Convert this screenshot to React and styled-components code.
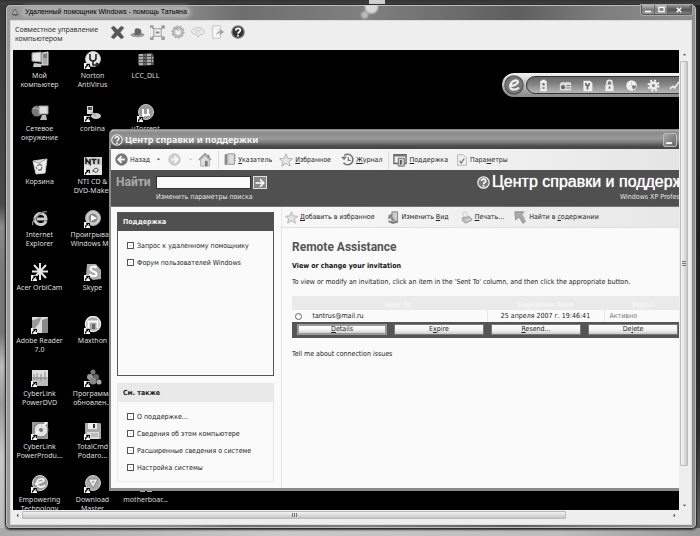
import React from "react";
import styled, { createGlobalStyle, css } from "styled-components";

const ui = '"DejaVu Sans Condensed", "DejaVu Sans", sans-serif';
const noto = '"Noto Sans", sans-serif';
const arial = '"Liberation Sans", Arial, sans-serif';
const roboto = 'Roboto, "Liberation Sans", sans-serif';

const GlobalStyle = createGlobalStyle`
  * { box-sizing: border-box; }
  body { margin: 0; font: 7px/10px ${ui}; color: #222; }
  button, input { font: inherit; color: inherit; margin: 0; padding: 0; }
  button { border: 0; background: none; white-space: nowrap; }
  svg { display: block; flex: none; }
  u { text-underline-offset: 1px; }
`;

/* ---------- outer Vista window ---------- */
const Backdrop = styled.div`
  min-height: 100vh;
  display: flex;
  flex-direction: column;
  padding: 4px 3px 9px 5px;
  overflow: hidden;
  background:
    linear-gradient(#d0d0d0, #d0d0d0) 54% 0 / 16px 4px no-repeat,
    linear-gradient(#333, #444) top / 100% 5px no-repeat,
    linear-gradient(90deg, #aaa, #c9c9c9 40%, #bdbdbd 80%, #999) bottom / 100% 10px no-repeat,
    linear-gradient(#222, #1d1d1d 45%, #2b2b2b 80%, #666) right / 6px 100% no-repeat,
    linear-gradient(#3a3a3a, #4a4a4a 38%, #8a8a8a 42%, #7a7a7a 50%, #777 62%, #bbb 68%, #999 75%, #c8c8c8 85%, #bbb);
`;

const RemoteWindow = styled.main`
  flex: 1;
  min-width: 0;
  display: flex;
  flex-direction: column;
  padding: 0 4px 3px;
  border: 1px solid #2e2e2e;
  border-radius: 5px;
  background: linear-gradient(90deg, #9a9a9a, #8b8b8b 25%, #6e6e6e 34%, #808080 52%, #5e5e5e 74%, #7d7d7d 86%, #909090);
  box-shadow: inset 0 0 0 1px #bdbdbd, 0 1px 2px #333;
`;

const Caption = styled.header`
  height: 15px;
  display: flex;
  align-items: flex-start;
  gap: 3px;
  padding-left: 1px;
  background:
    radial-gradient(circle at 53% 2px, #d8d8d8 0 5px, transparent 8px),
    radial-gradient(circle at 52% 10px, #bbb 0 2px, transparent 5px);
`;

const CaptionTitle = styled.h1`
  margin: 2px 0 0;
  padding: 0 3px;
  border-radius: 5px;
  font: 7px/10px ${arial};
  color: #000;
  background: #aaa;
  box-shadow: 0 0 4px 1px #aaa;
  white-space: nowrap;
`;

const CaptionIcon = styled.span`padding-top: 3px;`;

const CaptionButtons = styled.div`
  margin-left: auto;
  display: flex;
  border: 1px solid #555;
  border-top: 0;
  border-radius: 0 0 3px 3px;
  overflow: hidden;
  box-shadow: 0 0 0 1px #aaa;
`;

const CaptionButton = styled.button`
  width: ${(p) => (p.$wide ? 23 : 13)}px;
  height: 9px;
  display: grid;
  place-items: center;
  border-right: 1px solid #666;
  background: ${(p) => (p.$wide ? "linear-gradient(#999,#555 50%,#808080)" : "linear-gradient(#bbb,#7e7e7e 50%,#999)")};
`;

const Client = styled.div`
  flex: 1;
  display: flex;
  flex-direction: column;
  padding: 0 2px 4px 2px;
  background: #eee;
  border: 1px solid #dcdcdc;
`;

const SessionBar = styled.div`
  height: 29px;
  display: flex;
  align-items: center;
  gap: 3px;
  padding: 0 2px 7px;
`;

const SessionMode = styled.p`
  width: 91px;
  margin: 3px 0 0;
  font: 7px/9px ${noto};
  color: #333;
`;

const SessionButton = styled.button`
  width: 17px;
  height: 18px;
  display: grid;
  place-items: center;
`;

const Viewer = styled.div`
  flex: 1;
  display: grid;
  grid-template-columns: minmax(0, 1fr) 10px;
  grid-template-rows: 1fr 10px;
`;

const VScroll = styled.div`
  display: grid;
  grid-template-rows: 11px 1fr 9px;
  justify-items: center;
`;

const HScroll = styled.div`
  display: grid;
  grid-template-columns: 9px 1fr 9px;
  align-items: center;
`;

const Arrow = styled.button`
  width: 9px;
  height: 9px;
  display: grid;
  place-items: center;
`;

const thumb = css`
  display: grid;
  place-items: center;
  border: 1px solid #bbb;
  border-radius: 1px;
`;

const VThumb = styled.div`
  ${thumb}
  width: 8px;
  height: 92%;
  align-self: start;
  background: linear-gradient(90deg, #f4f4f4, #e4e4e4 50%, #c4c4c4);
`;

const HThumb = styled.div`
  ${thumb}
  width: 84%;
  height: 8px;
  background: linear-gradient(#f2f2f2, #ddd 50%, #c4c4c4);
`;

/* ---------- remote desktop ---------- */
const Desktop = styled.section`
  position: relative;
  overflow: hidden;
  background: #000;
`;

const Shortcuts = styled.div`
  display: grid;
  grid-template-columns: repeat(3, 53px);
  grid-template-rows: repeat(9, 53px);
  height: 460px;
  overflow: hidden;
`;

const Shortcut = styled.a`
  grid-column: ${(p) => p.$col};
  grid-row: ${(p) => p.$row};
  display: flex;
  flex-direction: column;
  align-items: center;
  gap: 2px;
  padding-top: 1px;
  font: 7px/9px ${noto};
  color: #ddd;
  text-align: center;
  text-decoration: none;
  white-space: pre;
`;

/* ---------- floating Acer toolbar ---------- */
const Launcher = styled.div`
  position: absolute;
  top: 23px;
  right: -26px;
  display: flex;
  align-items: center;
  height: 24px;
  padding: 2px 2px 2px 1px;
  gap: 2px;
  border-radius: 12px;
  background: linear-gradient(#f4f4f4, #b0b0b0 60%, #888);
`;

const LauncherTools = styled.div`
  display: flex;
  align-items: center;
  height: 18px;
  gap: 5px;
  padding: 0 18px 0 8px;
  border: 1px solid #333;
  border-radius: 9px;
  background: linear-gradient(#666, #858585 45%, #b8b8b8);
`;

const LauncherButton = styled.button`
  width: ${(p) => (p.$logo ? 21 : 17)}px;
  height: 20px;
  display: grid;
  place-items: center;
`;

/* ---------- help centre window ---------- */
const HelpWindow = styled.section`
  position: absolute;
  top: 79px;
  left: 96px;
  right: -35px;
  border: 1px solid #8a8a8a;
  border-width: 1px 2px 3px;
  border-radius: 5px 5px 0 0;
  background: #fafafa;
`;

const HelpCaption = styled.header`
  height: 19px;
  display: flex;
  align-items: center;
  gap: 2px;
  padding: 0 3px 0 0;
  border-radius: 4px 4px 0 0;
  background: linear-gradient(#aaa, #888 15%, #9b9b9b 45%, #7b7b7b 65%, #4b4b4b 85%, #444);
`;

const HelpTitle = styled.h2`
  margin: 0 auto 0 0;
  font: bold 9px/14px ${noto};
  color: #f4f4f4;
  white-space: nowrap;
`;

const HelpControl = styled.button`
  width: 14px;
  height: 14px;
  display: grid;
  place-items: center;
  border: 1px solid #bbb;
  border-radius: 2px;
  background: linear-gradient(135deg, #aaa, #666);
`;

const NavBar = styled.nav`
  height: 21px;
  display: flex;
  align-items: center;
  padding: 0 4px;
  background: linear-gradient(90deg, #f9f9f9, #f2f2f2 60%, #e2e2e2);
`;

const NavButton = styled.button`
  display: flex;
  align-items: center;
  gap: 2px;
  margin-right: ${(p) => p.$after || 4}px;
`;

const NavRule = styled.span`
  width: 1px;
  height: 18px;
  margin-right: 4px;
  background: #ddd;
`;

const SearchBand = styled.div`
  height: 37px;
  display: flex;
  justify-content: space-between;
  padding: 0 2px 0 5px;
  background: #505050;
  border-bottom: 1px solid #777;
  color: #e8e8e8;
`;

const SearchForm = styled.form`
  display: grid;
  grid-template-columns: 38px 95px 14px;
  grid-template-rows: 13px 10px;
  column-gap: 2px;
  row-gap: 3px;
  padding-top: 6px;
  align-items: center;
`;

const SearchLabel = styled.label`
  font: bold 12px/13px ${roboto};
  color: #aaa;
`;

const SearchInput = styled.input`
  width: 95px;
  height: 13px;
  padding: 0 2px;
  border: 1px solid #333;
  background: #fafafa;
  color: #222;
`;

const SearchGo = styled.button`
  width: 14px;
  height: 13px;
  display: grid;
  place-items: center;
  border: 1px solid #ddd;
  background: #888;
`;

const SearchOptions = styled.a`
  grid-column: 2 / 4;
  color: #e8e8e8;
  text-decoration: none;
  white-space: nowrap;
`;

const Brand = styled.div`
  width: 233px;
  padding-top: 3px;
  white-space: nowrap;
`;

const BrandName = styled.div`
  display: flex;
  align-items: center;
  gap: 2px;
  font: 16px/18px ${arial};
  color: #fff;
  text-shadow: 0 0 1px #fff;
`;

const BrandEdition = styled.div`
  padding: 1px 0 0 143px;
  line-height: 10px;
`;

const HelpBody = styled.div`
  display: grid;
  grid-template-columns: 171px minmax(0, 1fr);
  min-height: 280px;
`;

const Sidebar = styled.aside`
  display: flex;
  flex-direction: column;
  gap: 7px;
  padding: 5px 7px 6px 6px;
  border-right: 1px solid #e6e6e6;
`;

const Panel = styled.section`
  min-height: ${(p) => (p.$strong ? 164 : 99)}px;
  border: 1px solid ${(p) => (p.$strong ? "#555" : "#e8e8e8")};
`;

const PanelTitle = styled.h3`
  height: 18px;
  margin: 0;
  padding: 0 5px;
  font: bold 7px/19px ${ui};
  color: ${(p) => (p.$strong ? "#f4f4f4" : "#222")};
  background: ${(p) => (p.$strong ? "#505050" : "#e9e9e9")};
`;

const PanelList = styled.ul`
  margin: 0;
  padding: 6px 0 0 9px;
  list-style: none;
`;

const PanelItem = styled.li`height: 17px;`;

const PanelLink = styled.a`
  display: flex;
  align-items: center;
  gap: 3px;
  height: 17px;
  color: #222;
  text-decoration: none;
  white-space: nowrap;
`;

const Bullet = styled.span`
  width: 7px;
  height: 7px;
  border: 1px solid #555;
  background: linear-gradient(#bbb, #bbb) center / 1px 1px no-repeat #fff;
`;

const Content = styled.div`min-width: 0;`;

const ActionBar = styled.div`
  height: 21px;
  display: flex;
  align-items: center;
  gap: 6px;
  padding-left: 3px;
  border-bottom: 1px solid #e0e0e0;
  background: linear-gradient(90deg, #f8f8f8, #e6e6e6);
`;

const Article = styled.article`padding: 12px 22px 0 10px;`;

const ArticleTitle = styled.h2`
  margin: 0 0 7px;
  font: bold 12px/14px ${roboto};
  color: #555;
`;

const ArticleSub = styled.h3`
  margin: 0 0 6px;
  font: bold 7px/10px ${ui};
  color: #111;
`;

const Paragraph = styled.p`
  margin: 0;
  white-space: nowrap;
`;

const Invitations = styled.table`
  width: 391px;
  margin-top: 9px;
  border-collapse: collapse;
  table-layout: fixed;
`;

const HeadCell = styled.th`
  height: 14px;
  padding: 3px 0 0;
  width: ${(p) => p.$w || "auto"};
  font: bold 7px/10px ${ui};
  color: #f6f6f6;
  background: #eaeaea;
`;

const Cell = styled.td`
  height: 12px;
  padding: ${(p) => p.$pad || "0"};
  text-align: ${(p) => p.$align || "left"};
  color: ${(p) => (p.$muted ? "#777" : "#222")};
  border-right: 1px solid ${(p) => (p.$rule ? "#e6e6e6" : "transparent")};
`;

const Pick = styled.input`
  appearance: none;
  display: block;
  width: 7px;
  height: 7px;
  border: 1px solid #666;
  border-radius: 50%;
  background: #fff;
`;

const Commands = styled.div`
  width: 391px;
  height: 16px;
  display: grid;
  grid-template-columns: repeat(4, 90px);
  gap: 7px;
  padding: 2px 0 3px 5px;
  margin-bottom: 11px;
  background: #555;
`;

const Command = styled.button`
  border: ${(p) => (p.$focused ? "2px solid #999" : "1px solid #777")};
  line-height: ${(p) => (p.$focused ? 7 : 9)}px;
  background: linear-gradient(#fff, #f0f0f0 60%, #ccc);
`;

/* ---------- icons ---------- */
const Svg = ({ s = 14, h, children, vb = "0 0 16 16" }) => (
  <svg width={s} height={h || s} viewBox={vb} aria-hidden="true" fill="none">{children}</svg>
);

const HelpGlyph = ({ s = 12, dark }) => (
  <Svg s={s}>
    <circle cx="8" cy="8" r="7" fill={dark ? "#333" : "#777"} stroke={dark ? "#777" : "#f0f0f0"} strokeWidth="1.5" />
    <path d="M5.5 6.2C5.5 3 10.7 3 10.7 6c0 2-2.7 2-2.7 4M8 11.2v2" stroke="#fff" strokeWidth="2" />
  </Svg>
);

const ShortcutArrow = () => (
  <g><path d="M0 12h6v6H0z" fill="#fff" /><path d="M1.500 17.500c0-2 1-3 2.500-3.200M2.300 13.300h3v3" stroke="#000" strokeWidth="1.200" /></g>
);

const art = {
  computer: <><path d="M1 2l9-1v10L1 10z" fill="#e6e6e6" stroke="#999" /><path d="M11 2l6-1v13h-6z" fill="#aaa" stroke="#ddd" /><path d="M3 12l8 1-1 3H2z" fill="#ccc" /><path d="M12 4h4M12 6h4" stroke="#555" /></>,
  norton: <><circle cx="9" cy="8" r="7.500" fill="#e8e8e8" stroke="#bbb" /><path d="M6 3v4a3 3 0 006 0V3M9 10v4h4" stroke="#222" strokeWidth="1.600" /><circle cx="13" cy="13" r="1.500" fill="#222" /></>,
  archive: <><path d="M1 3l14-1 2 3v9l-15 1-1-3z" fill="#555" /><path d="M2 4h13M2 7h14M2 10h14M2 13h13" stroke="#ccc" strokeWidth="1.300" strokeDasharray="4 1 2 1" /><path d="M8 2v13" stroke="#222" strokeWidth="1" /></>,
  network: <><circle cx="6" cy="7" r="5.500" fill="#777" /><path d="M2 5c3-3 5 2 8 0" stroke="#bbb" /><path d="M8 2h9v8H8z" fill="#ddd" stroke="#999" /><path d="M11 11h4l1 5H9z" fill="#bbb" /></>,
  corbina: <><path d="M3 2h6v8H3z" fill="#ddd" /><path d="M4 3h4v3H4z" fill="#555" /><ellipse cx="12" cy="12" rx="5" ry="3" fill="#ccc" /><path d="M7 8l5 4" stroke="#aaa" strokeWidth="2" /></>,
  utorrent: <><circle cx="9" cy="8" r="7.500" fill="#999" stroke="#ccc" /><path d="M6 13V5M6 9c0 3 5 3 5 0V5M11 9c0 2 1 2 2 2" stroke="#fff" strokeWidth="2" /></>,
  bin: <><path d="M2 4l14-2-2 14-9 1z" fill="#eee" stroke="#ccc" /><path d="M2 4l6 2 7-4" stroke="#999" /><path d="M6 9l3-2 2 2M11 10l-1 3H7M6 12l-1-2" stroke="#777" strokeWidth="1.300" /></>,
  nti: <><path d="M0 0h18v18H0z" fill="#e4e4e4" /><path d="M0 0h18v8H0z" fill="#ccc" /><path d="M2 7V2l4 5V2M7.500 2.500h5M10 2.500V7M14.500 2v5" stroke="#222" strokeWidth="1.600" /><path d="M9 15c0-4 5-5 5-2s-4 3-5 0" stroke="#444" /></>,
  ie: <><path d="M15 11c-2 6-12 4-11-3 1-6 11-6 11 1H6" stroke="#ccc" strokeWidth="3" /><path d="M2 15C-1 12 11 0 16 2" stroke="#888" strokeWidth="1.300" /></>,
  player: <><circle cx="9" cy="8" r="7.500" fill="#ccc" stroke="#aaa" /><circle cx="9" cy="8" r="4.500" fill="#888" /><path d="M7 5l6 3-6 3z" fill="#fff" /></>,
  orbicam: <path d="M9 0v17M1 8.500h16M3 2l12 13M15 2L3 15" stroke="#e6e6e6" strokeWidth="2" />,
  skype: <><path d="M3 1h9l5 6v9l-8 1-7-5z" fill="#aaa" /><path d="M12.500 5c-1-2-6-2-6 1s6 2 6 5-5 3-7 0" stroke="#fff" strokeWidth="2" /></>,
  adobe: <><path d="M1 1h16v16H1z" fill="#ddd" /><path d="M1 4c5 0 7-3 9-3-1 6-4 10-9 13z" fill="#999" /><path d="M11 4v13h6V2z" fill="#888" /></>,
  maxthon: <><circle cx="9" cy="8" r="7.500" fill="#aaa" stroke="#eee" strokeWidth="1.500" /><path d="M4.500 12V5.500h9V12" stroke="#fff" strokeWidth="2" /><path d="M8 8h3v5H8z" fill="#666" /></>,
  dvd: <><path d="M1 1h16v16H1z" fill="#bbb" /><path d="M1 1h16v7H1z" fill="#ddd" /><path d="M2 9h14M3 5v6M6 4v7M10 5v7M14 3v8" stroke="#888" /></>,
  update: <><circle cx="9" cy="3" r="2.500" fill="#777" /><circle cx="6" cy="8" r="3" fill="#999" /><circle cx="12" cy="8" r="3" fill="#666" /><circle cx="9" cy="12" r="3.500" fill="#888" /><circle cx="15" cy="13" r="2.500" fill="#aaa" /></>,
  producer: <><path d="M1 0h16v17H1z" fill="#999" /><circle cx="10" cy="8" r="7" fill="#e3e3e3" stroke="#777" /><circle cx="10" cy="8" r="2" fill="#777" /><path d="M13 3l3-3M4 13l4-4" stroke="#fff" strokeWidth="2" /></>,
  disk: <><path d="M1 1h15l1 1v15H1z" fill="#aaa" /><path d="M4 1h9v6H4z" fill="#eee" /><path d="M9 2h2v4H9z" fill="#333" /><path d="M3 10h12v7H3z" fill="#ddd" /><path d="M7 12h7M7 14h7" stroke="#999" /></>,
  empower: <><circle cx="9" cy="8" r="7.500" fill="#999" stroke="#ddd" /><path d="M4 9c3-1 9-2 9-4S6 3 6 8s6 5 8 2" stroke="#eee" strokeWidth="2" /></>,
  download: <><circle cx="9" cy="8" r="7.500" fill="#aaa" stroke="#ccc" /><path d="M4 4h10L9 13z" fill="#eee" stroke="#888" /><path d="M8 6h2l-1 3z" fill="#888" /></>,
  file: <path d="M3 14h5v3H3zM10 14h5v3h-5z" fill="#aaa" />,
};

const shortcuts = [
  [1, 1, "computer", "Мой\nкомпьютер"], [1, 2, "network", "Сетевое\nокружение"], [1, 3, "bin", "Корзина"],
  [1, 4, "ie", "Internet\nExplorer"], [1, 5, "orbicam", "Acer OrbiCam", 1], [1, 6, "adobe", "Adobe Reader\n7.0", 1],
  [1, 7, "dvd", "CyberLink\nPowerDVD", 1], [1, 8, "producer", "CyberLink\nPowerProdu...", 1], [1, 9, "empower", "Empowering\nTechnology", 1],
  [2, 1, "norton", "Norton\nAntiVirus", 1], [2, 2, "corbina", "corbina", 1], [2, 3, "nti", "NTI CD &\nDVD-Maker", 1],
  [2, 4, "player", "Проигрыва...\nWindows M...", 1], [2, 5, "skype", "Skype", 1], [2, 6, "maxthon", "Maxthon", 1],
  [2, 7, "update", "Программа\nобновлен...", 1], [2, 8, "disk", "TotalCmd\nPodaro...", 1], [2, 9, "download", "Download\nMaster", 1],
  [3, 1, "archive", "LCC_DLL"], [3, 2, "utorrent", "uTorrent", 1], [3, 9, "file", "motherboar..."],
];

const sessionTools = [
  ["Отключить", <Svg s={15}><path d="M1 3l3-2 4 4 4-4 3 2-4 5 4 5-3 2-4-4-4 4-3-2 4-5z" fill="#555" stroke="#888" strokeWidth=".5" /></Svg>],
  ["Остановить", <Svg s={15}><ellipse cx="8" cy="10.500" rx="7.500" ry="2.500" fill="#999" /><path d="M5 10V5c2-3 7-1 7 1v3c-2 2-5 2-7 1z" fill="#666" /></Svg>],
  ["По размеру экрана", <Svg s={15}><path d="M4 4h8v8H4z" stroke="#999" /><path d="M6 7h4v2H6z" fill="#888" /><path d="M0 4V1h4M12 1h3v3M0 12v3h4M12 15h3v-3M1 1l3 3M15 1l-3 3M1 15l3-3M15 15l-3-3" stroke="#888" strokeWidth="1.200" /></Svg>],
  ["Параметры", <Svg s={14}><circle cx="8" cy="8" r="5" stroke="#bbb" strokeWidth="3.500" /><circle cx="8" cy="8" r="6.500" stroke="#aaa" strokeWidth="2" strokeDasharray="2 2" /><path d="M5 3l4 4" stroke="#888" /></Svg>],
  ["Беседа", <Svg s={14}><path d="M8 3c9 0 9 9 2 8l-2 3-1-3C-2 11-1 3 8 3z" stroke="#bbb" fill="#eee" /><path d="M4 6h8M4 8h7" stroke="#ccc" /></Svg>],
  ["Отправить файл", <Svg s={14}><path d="M2 1h9v3M11 11v4H2V1" stroke="#bbb" fill="#fafafa" /><path d="M6 12c0-4 2-5 4-5V4l5 4-5 4V9c-2 0-3 1-4 3z" fill="#aaa" /></Svg>],
  ["Справка", <HelpGlyph s={14} dark />],
];

const launcherTools = [
  <><path d="M4 2h2V1h4v1h2v13H4z" fill="#eee" /><path d="M8 5v3M8 10v2" stroke="#777" strokeWidth="3" /></>,
  <><path d="M1 6l2-2h11l1 2v8H1z" fill="#ddd" /><circle cx="5" cy="10" r="2.500" fill="#666" /><path d="M9 8h5M9 11h5" stroke="#666" /></>,
  <><path d="M3 2h8l3 3v10H3z" fill="#eee" /><path d="M6 5v2l2 2 2-2V5M8 9v4" stroke="#666" strokeWidth="2" /></>,
  <><path d="M3 7h10v8H3z" fill="#eee" /><path d="M5 7V4c0-3 6-3 6 0v3" stroke="#eee" strokeWidth="2" /><path d="M8 9v3" stroke="#777" strokeWidth="2" /></>,
  <><circle cx="8" cy="8" r="6.500" fill="#eee" /><path d="M8 8h6a6 6 0 01-4 5z" fill="#777" /><path d="M8 3v5" stroke="#ccc" /></>,
  <><circle cx="8" cy="8" r="3.500" stroke="#eee" strokeWidth="3" /><circle cx="8" cy="8" r="6" stroke="#eee" strokeWidth="3" strokeDasharray="2.400 2.300" /></>,
  <path d="M1 12l4-3 2 2 5-7 3 2" stroke="#eee" strokeWidth="2" />,
];

const Round = ({ flip, light }) => (
  <Svg s={13}>
    <circle cx="8" cy="8" r="7" fill={light ? "#d0d0d0" : "#777"} stroke={light ? "#bbb" : "#666"} />
    <path d={flip ? "M4 8h7M8 4l4 4-4 4" : "M12 8H5M8 4L4 8l4 4"} stroke="#f6f6f6" strokeWidth="2.200" />
  </Svg>
);
const Star = ({ s = 14 }) => <Svg s={s}><path d="M8 1l2 5 5.500.500-4 3.500 1.300 5L8 12l-4.800 3 1.300-5-4-3.500L6 6z" fill="#e4e4e4" stroke="#aaa" /></Svg>;
const Home = () => <Svg s={14}><path d="M1 8l7-7 7 7" stroke="#999" strokeWidth="2" /><path d="M3 8l5-5 5 5v7H3z" fill="#ddd" stroke="#aaa" /><path d="M8 9h3v6H8z" fill="#777" /><path d="M12 2v4" stroke="#888" strokeWidth="2" /></Svg>;
const Book = () => <Svg s={13}><path d="M2 2l3-1v14l-3-1z" fill="#888" /><path d="M6 1h8v13H6z" fill="#ddd" stroke="#888" /><path d="M14 3h2M14 6h2M14 9h2" stroke="#888" /></Svg>;
const History = () => <Svg s={13}><path d="M4 3a6.500 6.500 0 11-1 9" stroke="#777" strokeWidth="2" /><path d="M0 5l4 4 3-5z" fill="#777" /><path d="M9 5v4h3" stroke="#777" strokeWidth="1.500" /></Svg>;
const Support = () => <Svg s={14}><path d="M1 2h14v10H1z" stroke="#666" fill="#eee" strokeWidth="1.500" /><path d="M1 3h14" stroke="#777" strokeWidth="2" /><path d="M6 6h7v9H6z" fill="#ccc" stroke="#666" /><path d="M9 8v5" stroke="#555" strokeWidth="2" /></Svg>;
const Check = () => <Svg s={12}><path d="M2 1h8l4 4v10H2z" fill="#eee" stroke="#aaa" /><path d="M5 9l2 3 4-6" stroke="#777" strokeWidth="1.700" /></Svg>;
const Resize = () => <Svg s={13}><path d="M6 1h7v13H6z" fill="#ccc" stroke="#777" /><path d="M2 5l5-2-1 4 4 4-2 2-4-4-3 1z" fill="#888" /><path d="M2 12c3 4 9 3 10 0" stroke="#777" strokeWidth="2" /></Svg>;
const Print = () => <Svg s={13}><path d="M3 2l5-1 2 6-5 1z" fill="#eee" stroke="#ccc" /><path d="M3 8l9-1 3 4-8 4-4-3z" fill="#bbb" stroke="#999" /><path d="M7 12l6-2" stroke="#eee" /></Svg>;
const Locate = () => <Svg s={13}><path d="M1 1h14l-4 3 4 3-4 8-4-7-3 5z" fill="#ddd" /><path d="M1 1h11L9 4l5 9-3 2-5-8-4 4z" fill="#aaa" stroke="#888" /></Svg>;
const Pip = ({ d }) => <svg width="5" height="5" viewBox="0 0 6 6" aria-hidden="true"><path d={d} fill="#333" /></svg>;

const PanelItems = ({ items }) => (
  <PanelList>
    {items.map((t) => <PanelItem key={t}><PanelLink href="#"><Bullet />{t}</PanelLink></PanelItem>)}
  </PanelList>
);

function HelpCentre() {
  return (
    <HelpWindow>
      <HelpCaption>
        <HelpGlyph s={12} />
        <HelpTitle>Центр справки и поддержки</HelpTitle>
        <HelpControl aria-label="Свернуть"><Svg s={10}><path d="M2 13h9" stroke="#fff" strokeWidth="3" /></Svg></HelpControl>
        <HelpControl aria-label="Развернуть"><Svg s={10}><path d="M2 3h12v11H2z" stroke="#fff" strokeWidth="2" /></Svg></HelpControl>
        <HelpControl aria-label="Закрыть"><Svg s={10}><path d="M2 2l12 12M14 2L2 14" stroke="#fff" strokeWidth="2" /></Svg></HelpControl>
      </HelpCaption>
      <NavBar>
        <NavButton $after={6}><Round />Назад</NavButton>
        <NavButton aria-label="Список назад" $after={7}><Pip d="M1 2h4L3 4z" /></NavButton>
        <NavButton aria-label="Вперёд" $after={7}><Round flip light /></NavButton>
        <NavButton aria-label="Список вперёд" $after={5}><svg width="5" height="5" viewBox="0 0 6 6" aria-hidden="true"><path d="M1 2h4L3 4z" fill="#bbb" /></svg></NavButton>
        <NavButton aria-label="Домой" $after={6}><Home /></NavButton>
        <NavRule />
        <NavButton $after={7}><Book /><span><u>У</u>казатель</span></NavButton>
        <NavButton $after={10}><Star /><span><u>И</u>збранное</span></NavButton>
        <NavButton $after={6}><History /><span><u>Ж</u>урнал</span></NavButton>
        <NavRule />
        <NavButton $after={8}><Support /><span><u>П</u>оддержка</span></NavButton>
        <NavButton><Check /><span>Пара<u>м</u>етры</span></NavButton>
      </NavBar>
      <SearchBand>
        <SearchForm onSubmit={(e) => e.preventDefault()}>
          <SearchLabel htmlFor="find">Найти</SearchLabel>
          <SearchInput id="find" />
          <SearchGo aria-label="Начать поиск"><Svg s={10}><path d="M1 8h12M8 2l6 6-6 6" stroke="#fff" strokeWidth="2.500" /></Svg></SearchGo>
          <SearchOptions href="#">Изменить параметры поиска</SearchOptions>
        </SearchForm>
        <Brand>
          <BrandName><HelpGlyph s={13} />Центр справки и поддержки</BrandName>
          <BrandEdition>Windows XP Professional</BrandEdition>
        </Brand>
      </SearchBand>
      <HelpBody>
        <Sidebar>
          <Panel $strong>
            <PanelTitle $strong>Поддержка</PanelTitle>
            <PanelItems items={["Запрос к удаленному помощнику", "Форум пользователей Windows"]} />
          </Panel>
          <Panel>
            <PanelTitle>См. также</PanelTitle>
            <PanelItems items={["О поддержке...", "Сведения об этом компьютере", "Расширенные сведения о системе", "Настройка системы"]} />
          </Panel>
        </Sidebar>
        <Content>
          <ActionBar>
            <NavButton $after={6}><Star s={13} /><span><u>Д</u>обавить в избранное</span></NavButton>
            <NavButton $after={5}><Resize /><span>Изменить <u>В</u>ид</span></NavButton>
            <NavButton><Print /><span><u>П</u>ечать...</span></NavButton>
            <NavButton><Locate /><span>Найти в <u>с</u>одержании</span></NavButton>
          </ActionBar>
          <Article>
            <ArticleTitle>Remote Assistance</ArticleTitle>
            <ArticleSub>View or change your invitation</ArticleSub>
            <Paragraph>To view or modify an invitation, click an item in the 'Sent To' column, and then click the appropriate button.</Paragraph>
            <Invitations>
              <thead>
                <tr>
                  <HeadCell $w="16px" aria-label="Select" />
                  <HeadCell $w="179px">Sent To</HeadCell>
                  <HeadCell $w="117px">Expiration Time</HeadCell>
                  <HeadCell>Status</HeadCell>
                </tr>
              </thead>
              <tbody>
                <tr>
                  <Cell $pad="0 0 0 3px"><Pick type="radio" name="invitation" aria-label="tantrus@mail.ru" /></Cell>
                  <Cell $pad="0 0 0 4px" $rule>tantrus@mail.ru</Cell>
                  <Cell $align="center" $rule>25 апреля 2007 г. 19:46:41</Cell>
                  <Cell $pad="0 0 0 5px" $muted>Активно</Cell>
                </tr>
              </tbody>
            </Invitations>
            <Commands>
              <Command $focused><u>D</u>etails</Command>
              <Command>E<u>x</u>pire</Command>
              <Command><u>R</u>esend...</Command>
              <Command>De<u>l</u>ete</Command>
            </Commands>
            <Paragraph>Tell me about connection issues</Paragraph>
          </Article>
        </Content>
      </HelpBody>
    </HelpWindow>
  );
}

export default function App() {
  return (
    <>
      <GlobalStyle />
      <Backdrop>
        <RemoteWindow>
          <Caption>
            <CaptionIcon><Svg s={8}><path d="M2 13L8 2l6 11z" fill="#aaa" stroke="#555" strokeWidth="1.500" /><path d="M5 14h8" stroke="#444" strokeWidth="2" /></Svg></CaptionIcon>
            <CaptionTitle>Удаленный помощник Windows - помощь Татьяна</CaptionTitle>
            <CaptionButtons>
              <CaptionButton aria-label="Свернуть"><Svg s={8}><path d="M2 11h12" stroke="#fff" strokeWidth="3" /></Svg></CaptionButton>
              <CaptionButton aria-label="Развернуть"><Svg s={7}><path d="M2 3h12v10H2z" stroke="#fff" strokeWidth="3" /></Svg></CaptionButton>
              <CaptionButton aria-label="Закрыть" $wide><Svg s={6}><path d="M2 2l12 12M14 2L2 14" stroke="#fff" strokeWidth="4" /></Svg></CaptionButton>
            </CaptionButtons>
          </Caption>
          <Client>
            <SessionBar>
              <SessionMode>Совместное управление компьютером</SessionMode>
              {sessionTools.map(([label, icon]) => <SessionButton key={label} aria-label={label}>{icon}</SessionButton>)}
            </SessionBar>
            <Viewer>
              <Desktop>
                <Shortcuts>
                  {shortcuts.map(([col, row, icon, label, linked]) => (
                    <Shortcut key={label} href="#" $col={col} $row={row}>
                      <Svg s={18} h={18} vb="0 0 18 18">{art[icon]}{linked && <ShortcutArrow />}</Svg>
                      {label}
                    </Shortcut>
                  ))}
                </Shortcuts>
                <Launcher>
                  <LauncherButton $logo aria-label="Empowering Technology">
                    <Svg s={20}><circle cx="8" cy="8" r="7.300" fill="#777" stroke="#555" /><path d="M4 9c3 0 8-2 7-4S5 5 5 9s5 3 7 1" stroke="#eee" strokeWidth="1.800" /></Svg>
                  </LauncherButton>
                  <LauncherTools>
                    {launcherTools.map((icon, i) => <LauncherButton key={i} aria-label={`Acer ${i + 1}`}><Svg s={13}>{icon}</Svg></LauncherButton>)}
                  </LauncherTools>
                </Launcher>
                <HelpCentre />
              </Desktop>
              <VScroll>
                <Arrow aria-label="Вверх"><Pip d="M1 4h4L3 2z" /></Arrow>
                <VThumb><svg width="4" height="5" viewBox="0 0 4 5" aria-hidden="true"><path d="M0 .5h4M0 2.500h4M0 4.500h4" stroke="#777" /></svg></VThumb>
                <Arrow aria-label="Вниз"><Pip d="M1 2h4L3 4z" /></Arrow>
              </VScroll>
              <HScroll>
                <Arrow aria-label="Влево"><Pip d="M4 1v4L2 3z" /></Arrow>
                <HThumb><svg width="5" height="4" viewBox="0 0 5 4" aria-hidden="true"><path d="M.5 0v4M2.500 0v4M4.500 0v4" stroke="#777" /></svg></HThumb>
                <Arrow aria-label="Вправо"><Pip d="M2 1v4l2-2z" /></Arrow>
              </HScroll>
            </Viewer>
          </Client>
        </RemoteWindow>
      </Backdrop>
    </>
  );
}
